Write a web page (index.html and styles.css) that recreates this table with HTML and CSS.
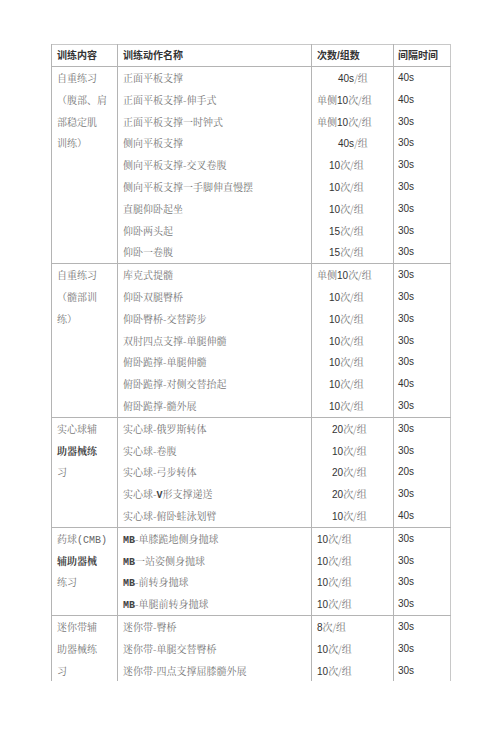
FILE: index.html
```html
<!DOCTYPE html>
<html lang="zh-CN">
<head>
<meta charset="utf-8">
<title>训练计划</title>
<link rel="stylesheet" href="styles.css">
</head>
<body>
<table class="plan">
  <colgroup><col class="c1"><col class="c2"><col class="c3"><col class="c4"></colgroup>
  <thead>
    <tr><th>训练内容</th><th>训练动作名称</th><th>次数/组数</th><th class="t">间隔时间</th></tr>
  </thead>
  <tbody>
    <tr><td class="cat" rowspan="9">自重练习<br>（腹部、肩<br>部稳定肌<br>训练）</td><td>正面平板支撑</td><td class="cnt ia"><span class="n">40s</span>/组</td><td class="t n">40s</td></tr>
    <tr><td>正面平板支撑-伸手式</td><td class="cnt">单侧<span class="n">10</span>次/组</td><td class="t n">40s</td></tr>
    <tr><td>正面平板支撑一时钟式</td><td class="cnt">单侧<span class="n">10</span>次/组</td><td class="t n">30s</td></tr>
    <tr><td>侧向平板支撑</td><td class="cnt ia"><span class="n">40s</span>/组</td><td class="t n">30s</td></tr>
    <tr><td>侧向平板支撑-交叉卷腹</td><td class="cnt ib"><span class="n">10</span>次/组</td><td class="t n">30s</td></tr>
    <tr><td>侧向平板支撑一手脚伸直慢摆</td><td class="cnt ib"><span class="n">10</span>次/组</td><td class="t n">30s</td></tr>
    <tr><td>直腿仰卧起坐</td><td class="cnt ib"><span class="n">10</span>次/组</td><td class="t n">30s</td></tr>
    <tr><td>仰卧两头起</td><td class="cnt ib"><span class="n">15</span>次/组</td><td class="t n">30s</td></tr>
    <tr class="end"><td>仰卧一卷腹</td><td class="cnt ib"><span class="n">15</span>次/组</td><td class="t n">30s</td></tr>
  </tbody>
  <tbody>
    <tr><td class="cat" rowspan="7">自重练习<br>（髓部训<br>练）</td><td>库克式提髓</td><td class="cnt">单侧<span class="n">10</span>次/组</td><td class="t n">30s</td></tr>
    <tr><td>仰卧双腿臀桥</td><td class="cnt ib"><span class="n">10</span>次/组</td><td class="t n">30s</td></tr>
    <tr><td>仰卧臀桥-交替跨步</td><td class="cnt ib"><span class="n">10</span>次/组</td><td class="t n">30s</td></tr>
    <tr><td>双肘四点支撑-单腿伸髓</td><td class="cnt ib"><span class="n">10</span>次/组</td><td class="t n">30s</td></tr>
    <tr><td>俯卧跪撑-单腿伸髓</td><td class="cnt ib"><span class="n">10</span>次/组</td><td class="t n">30s</td></tr>
    <tr><td>俯卧跪撑-对侧交替抬起</td><td class="cnt ib"><span class="n">10</span>次/组</td><td class="t n">40s</td></tr>
    <tr class="end"><td>俯卧跪撑-髓外展</td><td class="cnt ib"><span class="n">10</span>次/组</td><td class="t n">30s</td></tr>
  </tbody>
  <tbody>
    <tr><td class="cat" rowspan="5">实心球辅<br><b>助器械练</b><br>习</td><td>实心球-俄罗斯转体</td><td class="cnt ic"><span class="n">20</span>次/组</td><td class="t n">30s</td></tr>
    <tr><td>实心球-卷腹</td><td class="cnt ic"><span class="n">10</span>次/组</td><td class="t n">30s</td></tr>
    <tr><td>实心球-弓步转体</td><td class="cnt ic"><span class="n">20</span>次/组</td><td class="t n">20s</td></tr>
    <tr><td>实心球-<span class="m">V</span>形支撑递送</td><td class="cnt ic"><span class="n">20</span>次/组</td><td class="t n">30s</td></tr>
    <tr class="end"><td>实心球-俯卧蛙泳划臂</td><td class="cnt ic"><span class="n">10</span>次/组</td><td class="t n">40s</td></tr>
  </tbody>
  <tbody>
    <tr><td class="cat" rowspan="4">药球<span class="m">(CMB)</span><br><b>辅助器械</b><br>练习</td><td><span class="m">MB</span>-单膝跪地侧身抛球</td><td class="cnt"><span class="n">10</span>次/组</td><td class="t n">30s</td></tr>
    <tr><td><span class="m">MB</span>一站姿侧身抛球</td><td class="cnt"><span class="n">10</span>次/组</td><td class="t n">30s</td></tr>
    <tr><td><span class="m">MB</span>-前转身抛球</td><td class="cnt"><span class="n">10</span>次/组</td><td class="t n">30s</td></tr>
    <tr class="end"><td><span class="m">MB</span>-单腿前转身抛球</td><td class="cnt"><span class="n">10</span>次/组</td><td class="t n">30s</td></tr>
  </tbody>
  <tbody class="last">
    <tr><td class="cat" rowspan="3">迷你带辅<br>助器械练<br>习</td><td>迷你带-臀桥</td><td class="cnt"><span class="n">8</span>次/组</td><td class="t n">30s</td></tr>
    <tr><td>迷你带-单腿交替臀桥</td><td class="cnt"><span class="n">10</span>次/组</td><td class="t n">30s</td></tr>
    <tr><td>迷你带-四点支撑屈膝髓外展</td><td class="cnt"><span class="n">10</span>次/组</td><td class="t n">30s</td></tr>
  </tbody>
</table>
</body>
</html>
```

FILE: styles.css
```css
html, body {
  margin: 0;
  padding: 0;
  background: #ffffff;
}

body {
  padding: 44px 0 0 51px;
  font-family: "Noto Serif CJK SC", "AR PL UMing CN", "Noto Sans CJK SC", serif;
  font-size: 10px;
  color: #777;
}

.plan {
  border-collapse: collapse;
  table-layout: fixed;
  width: 399px;
  border-left: 1px solid #c8c8c8;
  border-right: 1px solid #c8c8c8;
  border-top: 1px solid #c8c8c8;
}

.c1 { width: 66px; }
.c2 { width: 194px; }
.c3 { width: 82px; }
.c4 { width: 57px; }

th, td {
  padding: 0 0 0 5px;
  height: 21.8px;
  line-height: 21.8px;
  text-align: left;
  vertical-align: top;
  white-space: nowrap;
  border-left: 1px solid #b4b4b4;
  overflow: hidden;
}

th {
  height: 21px;
  line-height: 21px;
  font-family: "Liberation Sans", "Noto Sans CJK SC", sans-serif;
  font-weight: bold;
  color: #333;
  border-bottom: 1px solid #b4b4b4;
}

tbody tr.end td,
tbody td.cat {
  border-bottom: 1px solid #b4b4b4;
}

tbody.last td.cat {
  border-bottom: none;
}

.cat {
  white-space: normal;
  color: #777;
}

.cat b {
  font-weight: bold;
  color: #444;
  line-height: 0;
}

.t {
  padding-left: 4px;
}

.n {
  font-family: "Liberation Sans", Arial, sans-serif;
  color: #333;
  line-height: 0;
}

td.n {
  line-height: 21.8px;
}

.m {
  font-family: "Liberation Mono", "DejaVu Sans Mono", monospace;
  font-weight: bold;
  color: #444;
  line-height: 0;
}

.cat .m {
  font-weight: normal;
  color: #666;
}

.ia { padding-left: 26px; }
.ib { padding-left: 17px; }
.ic { padding-left: 20px; }
```
